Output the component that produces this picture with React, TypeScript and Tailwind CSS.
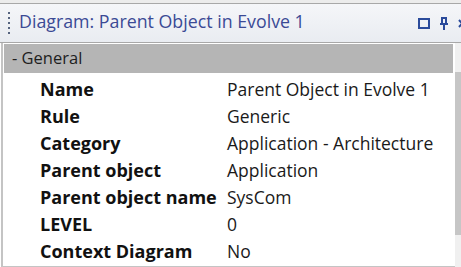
const rows: [string, string][] = [
  ["Name", "Parent Object in Evolve 1"],
  ["Rule", "Generic"],
  ["Category", "Application - Architecture"],
  ["Parent object", "Application"],
  ["Parent object name", "SysCom"],
  ["LEVEL", "0"],
  ["Context Diagram", "No"],
];

const App = () => {
  return (
    <div
      className="w-[461px] h-[267px] overflow-hidden pt-[3px] bg-[#ececec]"
      style={{ fontFamily: '"Open Sans", "Noto Sans", sans-serif' }}
    >
      <div className="h-[40px] border-t border-b border-[#a8a8a8] bg-gradient-to-b from-[#f5f6f9] to-[#e9ecf1] flex items-center overflow-hidden">
        <div className="flex flex-col gap-[3px] ml-[8px] mr-[9px]">
          <span className="w-[2px] h-[2px] bg-[#56647f]" />
          <span className="w-[2px] h-[2px] bg-[#56647f]" />
          <span className="w-[2px] h-[2px] bg-[#56647f]" />
          <span className="w-[2px] h-[2px] bg-[#56647f]" />
          <span className="w-[2px] h-[2px] bg-[#56647f]" />
        </div>
        <span className="text-[17.8px] text-[#3b4a95] leading-none pb-[2px] whitespace-nowrap">Diagram: Parent Object in Evolve 1</span>
        <div className="ml-auto flex items-center gap-[9px] mr-[-5px] shrink-0">
          <svg width="12" height="11" viewBox="0 0 12 11">
            <rect x="1" y="1" width="10" height="9" fill="none" stroke="#2b4b9b" strokeWidth="2" />
          </svg>
          <svg width="10" height="13" viewBox="0 0 10 13">
            <path d="M2 1h6M3 1v6M7 1v6M1 7h8M5 7v6" fill="none" stroke="#2b4b9b" strokeWidth="2" />
          </svg>
          <svg width="8" height="11" viewBox="0 0 8 11">
            <path d="M1 2l6 7M7 2l-6 7" fill="none" stroke="#2b4b9b" strokeWidth="2" />
          </svg>
        </div>
      </div>
      <div className="flex h-[224px] bg-white">
        <div className="flex-1 border-l-[2px] border-b border-[#c4c4c4] ml-[1px] flex flex-col">
          <div className="h-[29px] mt-[1px] ml-[1px] mr-[2px] bg-[#b5b5b5] flex items-center pl-[8px] text-[16.5px] text-[#1e1e1e]">
            - General
          </div>
          <div className="mt-[3px]">
            {rows.map(([k, v]) => (
              <div key={k} className="h-[27px] flex items-center text-[17.5px] whitespace-nowrap">
                <span className="w-[224px] shrink-0 pl-[37px] font-bold text-[#111] text-[18px]">{k}</span>
                <span className="text-[#1a1a1a]">{v}</span>
              </div>
            ))}
          </div>
        </div>
        <div className="w-[6px] flex flex-col bg-[#f0f0f0]">
          <div className="h-[29px]" />
          <div className="h-[163px] bg-[#c6c6c6]" />
        </div>
      </div>
    </div>
  );
};

export default App;
